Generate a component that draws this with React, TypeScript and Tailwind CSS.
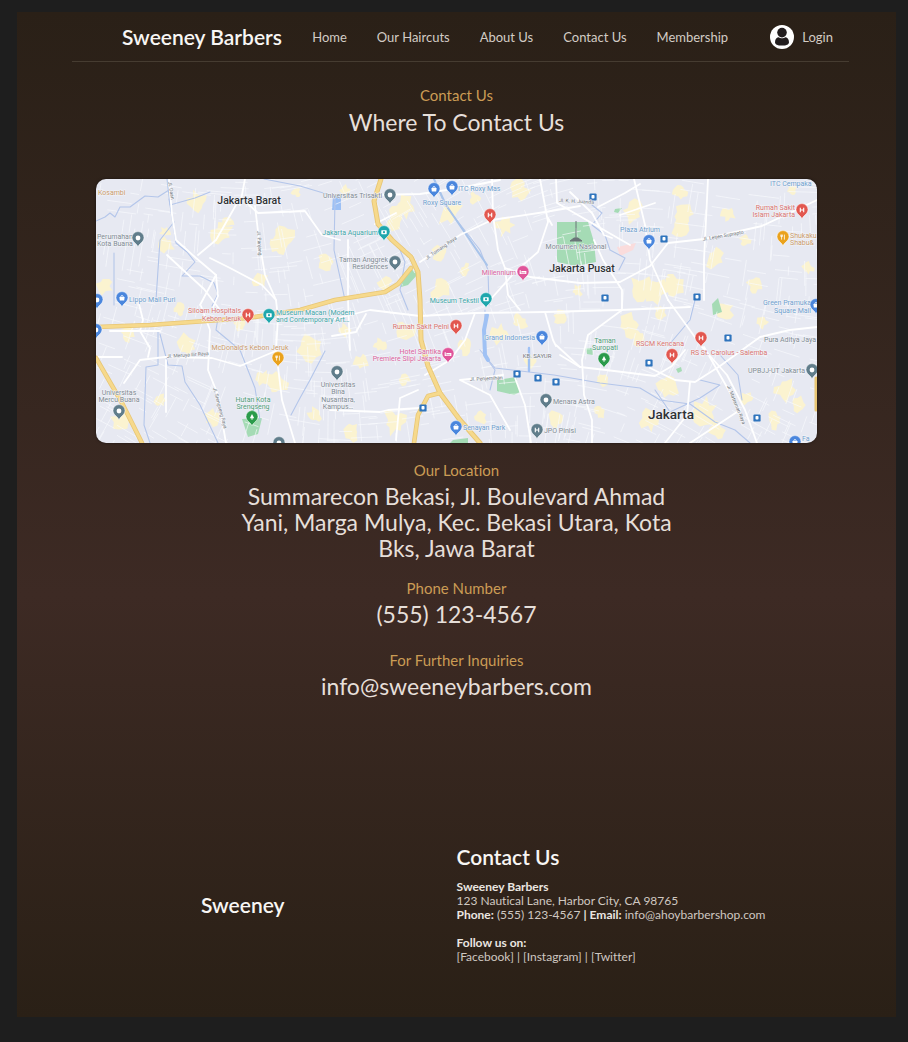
import React from "react";

type Pt = [number, number];

const INK = {
  grey: "#7f8a93",
  blue: "#6f9fce",
  teal: "#3fa5a8",
  red: "#d8736f",
  pink: "#d8619b",
  orange: "#c99a6b",
  green: "#4f9c78",
};

const PIN = {
  grey: "#607d8b",
  blue: "#4a86dd",
  teal: "#1fa7ad",
  red: "#e2574f",
  pink: "#e0559a",
  orange: "#eaa21d",
  green: "#2b9b4b",
};

type Tone = keyof typeof PIN;

const pins: { x: number; y: number; tone: Tone; mark: string }[] = [
  { x: 138, y: 238, tone: "grey", mark: "dot" },
  { x: 122, y: 298, tone: "blue", mark: "bag" },
  { x: 97, y: 300, tone: "blue", mark: "dot" },
  { x: 96, y: 330, tone: "blue", mark: "dot" },
  { x: 390, y: 195, tone: "grey", mark: "dot" },
  { x: 434, y: 189, tone: "blue", mark: "bag" },
  { x: 452, y: 187, tone: "blue", mark: "bag" },
  { x: 490, y: 215, tone: "red", mark: "H" },
  { x: 384, y: 232, tone: "teal", mark: "box" },
  { x: 395, y: 262, tone: "grey", mark: "dot" },
  { x: 523, y: 272, tone: "pink", mark: "bed" },
  { x: 486, y: 299, tone: "teal", mark: "box" },
  { x: 649, y: 241, tone: "blue", mark: "bag" },
  { x: 802, y: 210, tone: "red", mark: "H" },
  { x: 783, y: 237, tone: "orange", mark: "fork" },
  { x: 816, y: 305, tone: "blue", mark: "bag" },
  { x: 248, y: 315, tone: "red", mark: "H" },
  { x: 269, y: 315, tone: "teal", mark: "box" },
  { x: 278, y: 358, tone: "orange", mark: "fork" },
  { x: 337, y: 372, tone: "grey", mark: "dot" },
  { x: 119, y: 411, tone: "grey", mark: "dot" },
  { x: 252, y: 417, tone: "green", mark: "tree" },
  { x: 279, y: 443, tone: "grey", mark: "dot" },
  { x: 456, y: 326, tone: "red", mark: "H" },
  { x: 448, y: 354, tone: "pink", mark: "bed" },
  { x: 542, y: 337, tone: "blue", mark: "bag" },
  { x: 546, y: 400, tone: "grey", mark: "dot" },
  { x: 537, y: 430, tone: "grey", mark: "H" },
  { x: 456, y: 427, tone: "blue", mark: "bag" },
  { x: 604, y: 359, tone: "green", mark: "tree" },
  { x: 672, y: 355, tone: "red", mark: "H" },
  { x: 701, y: 338, tone: "red", mark: "H" },
  { x: 812, y: 370, tone: "grey", mark: "dot" },
  { x: 795, y: 442, tone: "blue", mark: "bag" },
];

const stations: Pt[] = [
  [593, 197], [664, 239], [605, 298], [697, 297], [517, 374], [538, 378], [556, 382],
  [423, 408], [649, 363], [728, 338], [757, 418],
];

const labels: { x: number; y: number; tone: Tone; text: string; end?: "start" | "middle" | "end" }[] = [
  { x: 98, y: 195, tone: "orange", text: "Kosambi" },
  { x: 97, y: 239, tone: "grey", text: "Perumahan" },
  { x: 97, y: 246, tone: "grey", text: "Kota Buana" },
  { x: 129, y: 302, tone: "blue", text: "Lippo Mall Puri" },
  { x: 323, y: 198, tone: "grey", text: "Universitas Trisakti" },
  { x: 458, y: 191, tone: "blue", text: "ITC Roxy Mas" },
  { x: 442, y: 205, tone: "blue", text: "Roxy Square", end: "middle" },
  { x: 378, y: 235, tone: "teal", text: "Jakarta Aquarium", end: "end" },
  { x: 388, y: 262, tone: "grey", text: "Taman Anggrek", end: "end" },
  { x: 388, y: 269, tone: "grey", text: "Residences", end: "end" },
  { x: 516, y: 275, tone: "pink", text: "Millennium", end: "end" },
  { x: 479, y: 303, tone: "teal", text: "Museum Tekstil", end: "end" },
  { x: 576, y: 249, tone: "grey", text: "Monumen Nasional", end: "middle" },
  { x: 640, y: 232, tone: "blue", text: "Plaza Atrium", end: "middle" },
  { x: 795, y: 210, tone: "red", text: "Rumah Sakit", end: "end" },
  { x: 795, y: 217, tone: "red", text: "Islam Jakarta", end: "end" },
  { x: 790, y: 238, tone: "orange", text: "Shukaku" },
  { x: 790, y: 245, tone: "orange", text: "Shabu&" },
  { x: 770, y: 186, tone: "blue", text: "ITC Cempaka" },
  { x: 811, y: 305, tone: "blue", text: "Green Pramuka", end: "end" },
  { x: 811, y: 313, tone: "blue", text: "Square Mall", end: "end" },
  { x: 241, y: 313, tone: "red", text: "Siloam Hospitals", end: "end" },
  { x: 241, y: 321, tone: "red", text: "Kebon Jeruk", end: "end" },
  { x: 276, y: 315, tone: "teal", text: "Museum Macan (Modern" },
  { x: 276, y: 322, tone: "teal", text: "and Contemporary Art…" },
  { x: 250, y: 350, tone: "orange", text: "McDonald's Kebon Jeruk", end: "middle" },
  { x: 338, y: 387, tone: "grey", text: "Universitas", end: "middle" },
  { x: 338, y: 394, tone: "grey", text: "Bina", end: "middle" },
  { x: 338, y: 402, tone: "grey", text: "Nusantara,", end: "middle" },
  { x: 338, y: 409, tone: "grey", text: "Kampus…", end: "middle" },
  { x: 119, y: 395, tone: "grey", text: "Universitas", end: "middle" },
  { x: 119, y: 402, tone: "grey", text: "Mercu Buana", end: "middle" },
  { x: 253, y: 402, tone: "green", text: "Hutan Kota", end: "middle" },
  { x: 253, y: 409, tone: "green", text: "Srengseng", end: "middle" },
  { x: 449, y: 329, tone: "red", text: "Rumah Sakit Pelni", end: "end" },
  { x: 441, y: 354, tone: "pink", text: "Hotel Santika", end: "end" },
  { x: 441, y: 361, tone: "pink", text: "Premiere Slipi Jakarta", end: "end" },
  { x: 535, y: 340, tone: "blue", text: "Grand Indonesia", end: "end" },
  { x: 553, y: 404, tone: "grey", text: "Menara Astra" },
  { x: 544, y: 433, tone: "grey", text: "JPO Pinisi" },
  { x: 463, y: 430, tone: "blue", text: "Senayan Park" },
  { x: 605, y: 343, tone: "green", text: "Taman", end: "middle" },
  { x: 605, y: 350, tone: "green", text: "Suropati", end: "middle" },
  { x: 660, y: 346, tone: "red", text: "RSCM Kencana", end: "middle" },
  { x: 729, y: 355, tone: "red", text: "RS St. Carolus - Salemba", end: "middle" },
  { x: 764, y: 342, tone: "grey", text: "Pura Aditya Jaya" },
  { x: 805, y: 373, tone: "grey", text: "UPBJJ-UT Jakarta", end: "end" },
  { x: 802, y: 441, tone: "blue", text: "Fa" },
];

const roads = [
  "M169 179L172 215L176 240L196 258L216 275L218 296L212 310",
  "M167 255L181 268L204 289L220 310M216 275L200 305",
  "M255 206L259 240L265 275L276 300L278 318L276 350L282 400L295 443",
  "M236 205L216 240L198 255M247 203L258 213L305 211L322 235L340 240",
  "M210 258L230 268L262 285L276 300M245 179L240 205",
  "M138 300L143 320L140 331L150 348L148 357M96 357L122 357M110 331L160 331",
  "M124 383L140 360L165 357L212 358L240 366L278 350",
  "M201 306L210 330L208 370L218 395L222 420L226 443M166 360L166 412",
  "M330 320L370 310L420 316L475 313L545 312L620 310L690 307",
  "M330 410L380 412L388 410L420 408M366 314L356 332L332 336",
  "M372 195L420 194L460 188L500 180M396 213L375 224",
  "M420 262L460 235L492 220L545 212L580 206",
  "M492 179L493 215L498 250L505 268L508 295L520 310",
  "M540 179L548 222L538 252L515 272L490 300M548 218L552 225",
  "M505 268L530 277L580 283L620 282L650 266L668 243L704 239L762 226L817 200",
  "M634 179L645 225L650 260L668 300M708 179L705 240L704 260L704 300",
  "M668 300L684 322L702 347L727 375L745 410L757 443",
  "M594 240L603 260L622 290L622 310L588 335L582 360L584 395L592 420L592 443",
  "M560 355L580 367L606 370L655 376L672 366L685 350",
  "M650 368L675 380L695 382L720 366L760 337L790 330L817 327",
  "M690 382L687 415L665 443M570 192L592 213L604 235L612 238",
  "M545 312L553 340L556 346M556 345L580 367M598 207L625 193L640 184",
  "M514 375L525 405L531 443M460 380L480 378L503 375M460 380L490 395L510 430",
  "M475 313L465 340L450 360L425 375M418 390L400 398L396 440M620 215L655 203",
  "M556 179L557 203L630 245M704 347L740 410L690 443M348 240L348 300L350 350",
];

const rivers = [
  "M96 221L105 217L110 213L115 217L120 207L130 207L145 196L158 197L169 190",
  "M169 199L174 230L176 243L187 252L195 262L182 276L200 276L214 283L218 294L212 306",
  "M264 179L300 186L330 195L335 200L334 250L345 300",
  "M174 222L160 240L156 300M114 253L114 305M167 179L170 205L195 198L210 192",
  "M158 331L158 365L146 367L144 425L150 443M160 334L168 365L182 366L185 382L200 405L218 443",
  "M218 318L216 330L240 350L255 388L260 420M325 351L310 380L300 398L291 415",
  "M434 179L445 205L480 250L488 270L489 305",
  "M592 205L602 213L592 225L605 235L610 250L625 258L619 270",
  "M480 350L495 368L554 375L600 383L640 388L660 400L690 404L715 422L735 430L750 443",
  "M668 346L690 320L695 300M720 355L738 375L742 400M655 390L670 412L700 398L720 385L700 380",
  "M398 245L405 262L400 290L408 310M485 310L484 355L495 370L490 390",
];

/* Small deterministic generator for the side streets and housing blocks. */
function makeRandom(seed: number) {
  let s = seed;
  return () => {
    s = (s * 1103515245 + 12345) % 2147483648;
    return s / 2147483648;
  };
}

function buildStreets() {
  const rand = makeRandom(41);
  const parts: string[] = [];
  for (let i = 0; i < 900; i++) {
    const x = 96 + rand() * 721;
    const y = 179 + rand() * 264;
    const tilt = Math.sin(x / 90) * 0.35 + Math.cos(y / 70) * 0.2;
    const a = tilt + (rand() > 0.5 ? Math.PI / 2 : 0);
    const len = 8 + rand() * 24;
    parts.push(`M${x.toFixed(1)} ${y.toFixed(1)}l${(Math.cos(a) * len).toFixed(1)} ${(Math.sin(a) * len).toFixed(1)}`);
  }
  return parts.join("");
}

const patchSpots: [number, number, number][] = [
  [197, 201, 9], [222, 233, 11], [167, 245, 8], [283, 237, 12], [325, 262, 9], [105, 286, 8], [260, 280, 8],
  [128, 333, 8], [188, 345, 10], [310, 348, 12], [275, 383, 12], [212, 417, 8], [122, 420, 10], [345, 330, 6],
  [296, 192, 5], [405, 206, 11], [450, 213, 12], [475, 198, 6], [395, 222, 8], [520, 190, 9], [505, 225, 10],
  [440, 252, 8], [385, 285, 7], [440, 290, 10], [465, 270, 6], [345, 192, 6], [405, 330, 9], [380, 345, 6],
  [466, 346, 9], [500, 335, 9], [362, 362, 8], [405, 378, 7], [395, 422, 12], [352, 432, 8], [480, 418, 6],
  [555, 420, 8], [520, 322, 8], [633, 213, 11], [680, 225, 11], [680, 192, 7], [728, 214, 7], [715, 258, 10],
  [755, 285, 9], [642, 288, 12], [656, 292, 12], [672, 286, 11], [745, 240, 6], [792, 190, 6], [630, 325, 11],
  [640, 338, 8], [660, 312, 7], [602, 381, 7], [668, 387, 11], [650, 420, 10], [705, 412, 12], [717, 430, 8],
  [785, 390, 11], [800, 405, 8], [775, 420, 8], [747, 398, 6], [725, 310, 9], [762, 322, 6], [577, 291, 6],
  [530, 362, 6], [560, 317, 7], [180, 310, 6], [240, 325, 6], [160, 400, 6], [315, 415, 7], [600, 412, 6],
  [808, 268, 6], [228, 221, 6], [166, 232, 6], [278, 246, 8], [684, 214, 9], [398, 212, 8], [262, 378, 7],
];

function buildPatches() {
  const rand = makeRandom(7);
  return patchSpots.map(([cx, cy, r]) => {
    const pts: string[] = [];
    for (let i = 0; i < 13; i++) {
      const a = (i / 13) * Math.PI * 2;
      const d = r * (0.5 + rand() * 0.75);
      pts.push(`${(cx + Math.cos(a) * d).toFixed(1)} ${(cy + Math.sin(a) * d * 1.1).toFixed(1)}`);
    }
    return `M${pts.join("L")}Z`;
  });
}

const streets = buildStreets();
const patches = buildPatches();

function PinMark({ kind }: { kind: string }) {
  switch (kind) {
    case "H":
      return <path d="M-1.7 -2.3V2.3M1.7 -2.3V2.3M-1.7 0H1.7" stroke="#fff" strokeWidth="1.1" fill="none" />;
    case "bag":
      return (
        <g>
          <path d="M-2.6 -0.9H2.6L2.2 2.6H-2.2Z" fill="#fff" />
          <path d="M-1.3 -0.8a1.3 1.7 0 0 1 2.6 0" stroke="#fff" strokeWidth="0.8" fill="none" />
        </g>
      );
    case "box":
      return (
        <g>
          <rect x="-2.7" y="-1.8" width="5.4" height="4" rx="0.6" fill="#fff" />
          <circle cx="0" cy="0.2" r="1.1" fill={PIN.teal} />
        </g>
      );
    case "bed":
      return <path d="M-2.8 -1.8V2M-2.8 1.2H2.8M2.8 2V-0.4H-1.6" stroke="#fff" strokeWidth="1.1" fill="none" />;
    case "fork":
      return <path d="M-1.4 -2.4V2.6M1.4 -2.4V2.6M-2.2 -2.4V-0.4H-0.6V-2.4" stroke="#fff" strokeWidth="0.8" fill="none" />;
    case "tree":
      return <path d="M0 -3L2.2 1.2H0.5V2.8H-0.5V1.2H-2.2Z" fill="#fff" />;
    default:
      return <circle r="2.4" fill="#fff" />;
  }
}

function CityMap() {
  return (
    <svg
      viewBox="96 179 721 264"
      className="block h-auto w-full rounded-[10px] bg-[#e7e9f2] shadow-[0_0_3px_rgba(0,0,0,0.5)]"
      role="img"
      aria-label="Map of Jakarta"
    >
      <g fill="#fbf3d0">
        {patches.map((d) => (
          <path key={d} d={d} />
        ))}
      </g>
      <g fill="#a5dbb5">
        <path d="M557 222H588L594 242L596 262L576 266L557 262Z" />
        <path d="M497 380L516 377L520 392L514 395L497 391Z" />
        <path d="M401 283L410 268L418 274L408 285L401 287Z" />
        <path d="M242 419L262 418L258 434L248 437Z" />
        <path d="M712 304L718 298L722 312L713 315Z" />
        <path d="M453 440L468 438V443H450Z" />
        <path d="M615 209L622 208L618 213L614 212ZM676 369L681 367L682 371L678 373ZM585 348L592 348L593 355L587 354Z" />
      </g>
      <path d="M617 247L636 243L633 250L620 256Z" fill="#fadcdc" />
      <path d="M333 196H341V210H332Z" fill="#9cc0f5" />
      <path d={streets} stroke="#f9fafd" strokeWidth="0.8" strokeOpacity="0.8" fill="none" />
      <g fill="none" strokeLinejoin="round" strokeLinecap="round">
        {rivers.map((d) => (
          <path key={d} d={d} stroke="#b4c6ea" strokeWidth="1.1" />
        ))}
        <path d="M487 315L484 330L485 355L488 360" stroke="#9fc1f4" strokeWidth="4" />
        <path d="M529 348V371" stroke="#9fc1f4" strokeWidth="2.4" />
        <path d="M434 179L446 205L487 265" stroke="#a9c4ea" strokeWidth="2" />
        {roads.map((d) => (
          <path key={d} d={d} stroke="#ffffff" strokeWidth="1.8" />
        ))}
        <g stroke="#e8c675">
          <path d="M381 179L374 201L378 224L392 240L411 257L418 272L420 300L421 340L428 366L440 393L460 420L480 443" strokeWidth="5" />
          <path d="M96 327L150 325L248 318L300 310L335 300L385 292L398 284L411 268" strokeWidth="4.6" />
          <path d="M96 358L122 403L142 443" strokeWidth="4.6" />
          <path d="M440 393L428 396L418 415L414 443" strokeWidth="4.6" />
          <path d="M816 378V410" strokeWidth="3" />
        </g>
        <g stroke="#f6d98c">
          <path d="M381 179L374 201L378 224L392 240L411 257L418 272L420 300L421 340L428 366L440 393L460 420L480 443" strokeWidth="3.2" />
          <path d="M96 327L150 325L248 318L300 310L335 300L385 292L398 284L411 268" strokeWidth="3" />
          <path d="M96 358L122 403L142 443" strokeWidth="3" />
          <path d="M440 393L428 396L418 415L414 443" strokeWidth="3" />
        </g>
      </g>

      <path d="M576 221V238M570 241L574 238H578L582 241Z" stroke="#6b7478" strokeWidth="1" fill="#6b7478" />

      {stations.map(([x, y]) => (
        <g key={`${x}-${y}`} transform={`translate(${x} ${y})`}>
          <rect x="-3.6" y="-3.6" width="7.2" height="7.2" rx="1.2" fill="#2f74bd" />
          <rect x="-1.5" y="-2" width="3" height="3.4" rx="0.7" fill="#fff" />
        </g>
      ))}

      <g fontFamily="Roboto, sans-serif" fontSize="7" stroke="#f4f5f9" strokeWidth="1" paintOrder="stroke">
        {labels.map((l) => (
          <text key={l.text + l.x + l.y} x={l.x} y={l.y} textAnchor={l.end ?? "start"} fill={INK[l.tone]}>
            {l.text}
          </text>
        ))}
        <g fontSize="5" fill="#70757a">
          <text transform="translate(257 231) rotate(86)">Jl. Panjang</text>
          <text transform="translate(427 260) rotate(-35)">Jl. Tomang Raya</text>
          <text transform="translate(559 202) rotate(3)">Jl. K. H. Juanda</text>
          <text transform="translate(703 241) rotate(-10)">Jl. Letjen Suprapto</text>
          <text transform="translate(167 358) rotate(-4)">Jl. Meruya Ilir Raya</text>
          <text transform="translate(213 388) rotate(75)">Jl. Srengseng Raya</text>
          <text transform="translate(727 386) rotate(68)">Jl. Matraman Raya</text>
          <text transform="translate(470 381) rotate(-3)">Jl. Penjernihan</text>
          <text transform="translate(168 182) rotate(80)">Jl. Daan</text>
          <text x="537" y="358" fontSize="6" textAnchor="middle">KB. SAYUR</text>
        </g>
        <g fill="#2e3135" fontWeight="500" textAnchor="middle">
          <text x="249" y="204" fontSize="10.5">Jakarta Barat</text>
          <text x="582" y="272" fontSize="10.5">Jakarta Pusat</text>
          <text x="671" y="419" fontSize="13.5">Jakarta</text>
        </g>
      </g>

      {pins.map((p) => (
        <g key={`${p.x}-${p.y}`} transform={`translate(${p.x} ${p.y})`}>
          <path
            d="M0 9C-1 5.6 -6 4 -6 -0.4A6 6 0 0 1 6 -0.4C6 4 1 5.6 0 9Z"
            fill={PIN[p.tone]}
            stroke="#fff"
            strokeWidth="0.5"
          />
          <PinMark kind={p.mark} />
        </g>
      ))}
    </svg>
  );
}

function UserIcon() {
  return (
    <svg viewBox="0 0 24 24" className="size-6" aria-hidden="true">
      <circle cx="12" cy="12" r="12" fill="#fff" />
      <circle cx="12" cy="7.6" r="4.8" fill="#221d1e" />
      <path d="M5 17.2C5 14 7 12.2 8.8 12.2C10.4 13.7 13.6 13.7 15.2 12.2C17 12.2 19 14 19 17.2C19 19.6 16 20.6 12 20.6S5 19.6 5 17.2Z" fill="#221d1e" />
    </svg>
  );
}

const links = ["Home", "Our Haircuts", "About Us", "Contact Us", "Membership"];

function Detail({ label, children }: { label: string; children: React.ReactNode }) {
  return (
    <section>
      <h2 className="text-[15px] leading-5 text-[#cb9c55]">{label}</h2>
      <p className="mt-[3px] text-[23px] leading-[26px] text-[#e6dfd9]">{children}</p>
    </section>
  );
}

export default function App() {
  return (
    <div className="min-h-screen bg-[#1e1e1e] pt-3 pr-3 pb-6 pl-[17px] font-['Lato',sans-serif] [font-variant-ligatures:none]">
      <div className="bg-linear-to-b from-[#2a2017] via-[#3d2a24] via-58% to-[#2a2016]">
        <header className="mr-[47px] ml-[55px] flex h-[50px] items-center justify-between border-b border-[#463c31] pr-4 pl-[50px]">
          <a href="#" className="text-[21px] leading-6 font-semibold whitespace-nowrap text-[#f8f6f4]">
            Sweeney Barbers
          </a>
          <nav className="flex gap-[30px] text-[13px] leading-4 text-[#d3ccc5]">
            {links.map((l) => (
              <a key={l} href="#" className="whitespace-nowrap">
                {l}
              </a>
            ))}
          </nav>
          <a href="#" className="ml-3 flex items-center gap-2 text-[13px] leading-4 text-[#d3ccc5]">
            <UserIcon />
            Login
          </a>
        </header>

        <main className="px-[79px] text-center">
          <h2 className="pt-[23px] text-[15px] leading-5 text-[#cb9c55]">Contact Us</h2>
          <h1 className="mt-[3px] text-[23px] leading-7 text-[#e6dfd9]">Where To Contact Us</h1>
          <div className="mt-[43px]">
            <CityMap />
          </div>
          <div className="mx-auto mt-[17px] max-w-[440px]">
            <Detail label="Our Location">
              Summarecon Bekasi, Jl. Boulevard Ahmad Yani, Marga Mulya, Kec. Bekasi Utara, Kota Bks, Jawa Barat
            </Detail>
            <div className="mt-[17px]">
              <Detail label="Phone Number">(555) 123-4567</Detail>
            </div>
            <div className="mt-[23px]">
              <Detail label="For Further Inquiries">info@sweeneybarbers.com</Detail>
            </div>
          </div>
        </main>

        <footer className="mt-[146px] grid grid-cols-2 items-center pb-[53px]">
          <p className="pl-3 text-center text-[21px] leading-6 font-semibold text-[#f8f6f4]">Sweeney</p>
          <div className="text-[12px] leading-[14px] text-[#cfc8c1]">
            <h2 className="mb-[11px] text-[21px] leading-6 font-semibold text-[#f8f6f4]">Contact Us</h2>
            <p className="font-bold text-[#ebe6e1]">Sweeney Barbers</p>
            <p>123 Nautical Lane, Harbor City, CA 98765</p>
            <p>
              <b className="text-[#ebe6e1]">Phone:</b> (555) 123-4567 <b className="text-[#ebe6e1]">| Email:</b>{" "}
              info@ahoybarbershop.com
            </p>
            <p className="mt-[14px] font-bold text-[#ebe6e1]">Follow us on:</p>
            <p>
              <a href="#">[Facebook]</a> | <a href="#">[Instagram]</a> | <a href="#">[Twitter]</a>
            </p>
          </div>
        </footer>
      </div>
    </div>
  );
}
